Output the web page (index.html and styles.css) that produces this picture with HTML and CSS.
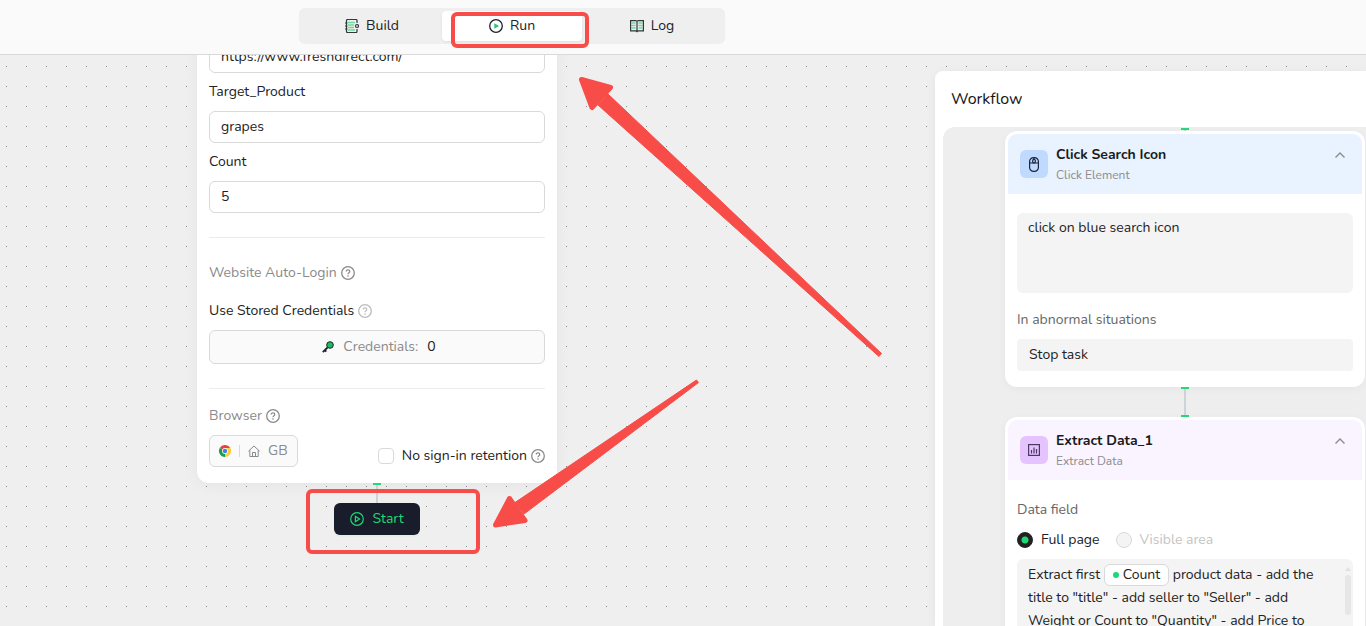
FILE: index.html
```html
<!DOCTYPE html>
<html lang="en">
<head>
<meta charset="utf-8">
<title>Workflow run</title>
<link rel="stylesheet" href="styles.css">
</head>
<body>
<svg class="symbols" aria-hidden="true">
  <symbol id="help" viewBox="0 0 14 14"><circle cx="7" cy="7" r="6.3" fill="none" stroke="currentColor" stroke-width="1.3"/><path d="M5.2 5.6c0-2.4 3.6-2.3 3.6-.1 0 1.300-1.800 1.300-1.800 2.700" fill="none" stroke="currentColor" stroke-width="1.200"/><circle cx="7" cy="10" r=".8" fill="currentColor"/></symbol>
  <symbol id="chevron" viewBox="0 0 12 12"><path d="M1.500 8.500 6 4l4.500 4.500" fill="none" stroke="currentColor" stroke-width="1.400"/></symbol>
</svg>

<header class="topbar">
  <nav class="tabs">
    <button class="tab" type="button">
      <svg class="icon-md" viewBox="0 0 14 14" fill="none"><path d="M3 3.500h7M3 6h6M3 8.500h6M3 11h7" stroke="#6fdc9c" stroke-width="1.500"/><path d="M12 4V1.500a1 1 0 0 0-1-1H2.500a1 1 0 0 0-1 1v11a1 1 0 0 0 1 1H11a1 1 0 0 0 1-1V10M0 4h2.500M0 7h2.500M0 10h2.500" stroke="#33363f" stroke-width="1.200"/><circle cx="12" cy="7" r="1.500" stroke="#33363f" stroke-width="1.200"/></svg>
      Build
    </button>
    <button class="tab tab-active" type="button">
      <svg class="icon-md" viewBox="0 0 14 14"><circle cx="7" cy="7" r="6.300" fill="none" stroke="#1d2129" stroke-width="1.300"/><path d="M5.300 4.200v5.600L10 7z" fill="#1fc96b"/></svg>
      Run
    </button>
    <button class="tab" type="button">
      <svg class="icon-md" viewBox="0 0 14 14" fill="none"><path d="M1.500 4h4M1.500 6.500h4M8.500 4h4M8.500 6.500h4M1.500 9h4M8.500 9h4" stroke="#6fdc9c" stroke-width="1.300"/><path d="M.6 1.600h5.200L7 2.400l1.200-.8h5.200v10.200H8.200L7 12.700l-1.200-.9H.6zM7 2.400v10" stroke="#33363f" stroke-width="1.200"/></svg>
      Log
    </button>
  </nav>
</header>

<main class="canvas">
  <section class="run-node">
    <form class="card">
      <input class="field" type="text" aria-label="Website URL" value="https://www.freshdirect.com/">
      <label class="label" for="product">Target_Product</label>
      <input class="field" id="product" type="text" value="grapes">
      <label class="label" for="count">Count</label>
      <input class="field" id="count" type="text" value="5">
      <hr class="rule">
      <h2 class="group-title">Website Auto-Login <svg class="icon-md"><use href="#help"/></svg></h2>
      <h3 class="sub-title">Use Stored Credentials <svg class="icon-md faint"><use href="#help"/></svg></h3>
      <button class="outline credentials" type="button">
        <svg class="icon-sm" viewBox="0 0 12 12"><path d="M5.500 6.500.8 11.200M2.800 9.200l1.500 1.500" stroke="#1d2129" stroke-width="1.800"/><circle cx="8" cy="4" r="3.300" fill="#17bf63" stroke="#1d2129"/></svg>
        <span>Credentials:</span><span class="strong">0</span>
      </button>
      <hr class="rule">
      <h2 class="group-title browser-title">Browser <svg class="icon-md"><use href="#help"/></svg></h2>
      <div class="browser-row">
        <button class="outline browser" type="button">
          <svg class="icon-sm" viewBox="0 0 12 12"><path d="M6 6 .8 3A6 6 0 0 1 11.200 3z" fill="#ea4335"/><path d="M6 6 .8 3A6 6 0 0 0 6 12l3-4z" fill="#1a9c50"/><path d="M6 6V3h5.200A6 6 0 0 1 6 12z" fill="#fbce35"/><circle cx="6" cy="6" r="2.900" fill="#fff"/><circle cx="6" cy="6" r="2.200" fill="#3f7fee"/></svg>
          <span class="bar"></span>
          <svg class="icon-sm" viewBox="0 0 12 12" fill="none" stroke="#8a8a8a"><path d="M.4 6.200 6 1l5.600 5.200M1.800 5.200v6.300h8.400V5.200M4.500 11.500v-4h3v4"/></svg>
          <span>GB</span>
        </button>
        <label class="retention"><input class="check" type="checkbox">No sign-in retention <svg class="icon-md muted"><use href="#help"/></svg></label>
      </div>
    </form>
    <span class="link link-start"></span>
    <button class="start" type="button">
      <svg class="icon-md" viewBox="0 0 14 14" fill="none" stroke="currentColor" stroke-width="1.200"><circle cx="7" cy="7" r="6.300"/><path d="M5.400 4.400v5.200L9.600 7z"/></svg>
      Start
    </button>
  </section>

  <aside class="panel">
    <h2 class="panel-title">Workflow</h2>
    <div class="flow">
      <span class="link link-in"></span>
      <article class="step">
        <header class="step-head blue">
          <span class="tile"><svg class="icon-mouse" viewBox="0 0 10 15" fill="none" stroke="#1d2740" stroke-width="1.200"><rect x=".6" y=".6" width="8.800" height="13.800" rx="4"/><path d="M.6 6h8.800M5 .6V2"/><rect x="3.700" y="2.300" width="2.600" height="3.700" rx="1.300"/></svg></span>
          <div class="names"><h3 class="step-name">Click Search Icon</h3><p class="step-kind">Click Element</p></div>
          <button class="toggle" type="button" aria-label="Collapse"><svg class="icon-sm"><use href="#chevron"/></svg></button>
        </header>
        <div class="step-body">
          <textarea class="prompt" aria-label="Element description">click on blue search icon</textarea>
          <label class="step-label" for="abnormal">In abnormal situations</label>
          <select class="choice" id="abnormal"><option>Stop task</option></select>
        </div>
      </article>
      <span class="link link-between"></span>
      <article class="step">
        <header class="step-head purple">
          <span class="tile"><svg class="icon-sm" viewBox="0 0 12 12" fill="none" stroke="#4a3a63" stroke-width="1.200"><rect x=".6" y=".6" width="10.800" height="10.800"/><path d="M3.500 6v3.500M6 3.500v6M8.500 5v4.500"/></svg></span>
          <div class="names"><h3 class="step-name">Extract Data_1</h3><p class="step-kind">Extract Data</p></div>
          <button class="toggle" type="button" aria-label="Collapse"><svg class="icon-sm"><use href="#chevron"/></svg></button>
        </header>
        <div class="step-body">
          <h4 class="data-label">Data field</h4>
          <div class="radios">
            <label class="radio-label"><input class="radio" type="radio" name="area" checked>Full page</label>
            <label class="radio-label off"><input class="radio" type="radio" name="area" disabled>Visible area</label>
          </div>
          <div class="rich">
            <div class="rich-text" role="textbox" aria-label="Extraction prompt" contenteditable="true" spellcheck="false">Extract first <span class="chip">Count</span> product data - add the<br>title to "title" - add seller to "Seller" - add<br>Weight or Count to "Quantity" - add Price to</div>
            <div class="scroll"><svg class="scroll-arrow" viewBox="0 0 6 4"><path d="M0 4 3 0l3 4z" fill="#e2e2e2"/></svg><span class="thumb"></span></div>
          </div>
        </div>
      </article>
    </div>
  </aside>
</main>

<svg class="notes" viewBox="0 0 1366 626" aria-hidden="true">
  <g fill="none" stroke="#f74c48" stroke-width="4"><rect x="453" y="14" width="134" height="32" rx="4"/><rect x="308" y="491" width="170" height="61" rx="4"/></g>
  <g fill="#f74c48" stroke="#f74c48" stroke-linejoin="round">
    <path stroke-width="5" d="M581.500 79.500 610.500 87.500 592 107.500z"/>
    <path stroke-width="1" d="M608 94 881.500 353.500 879 356.500 598 105z"/>
    <path stroke-width="5" d="M495.500 525 509.500 498.500 525 520.500z"/>
    <path stroke-width="1" d="M515 502.500 696.500 380 698.500 382.500 524 514z"/>
  </g>
</svg>
</body>
</html>
```
FILE: styles.css
```css
* { box-sizing: border-box; }
html, body { height: 100%; }
body {
  margin: 0;
  display: flex;
  flex-direction: column;
  overflow: hidden;
  background: #efefef;
  color: #222;
  font: 14px/22px Nunito, Lato, sans-serif;
}
button, input, select, textarea { font: inherit; color: inherit; margin: 0; }
h2, h3, h4, p { margin: 0; font-size: 14px; font-weight: 400; }
svg { flex: none; }
.symbols { position: absolute; width: 0; height: 0; }
.icon-md { width: 14px; height: 14px; }
.icon-sm { width: 12px; height: 12px; }
.icon-mouse { width: 10px; height: 15px; }
.muted { color: #8a8a8a; }
.faint { color: #bdbdbd; }

.topbar {
  flex: none;
  height: 55px;
  padding: 8px 0 0 299px;
  background: #fafafa;
  border-bottom: 1px solid #d9d9d9;
  display: flex;
}
.tabs { display: flex; width: 426px; height: 36px; padding: 3px; background: #efefef; border-radius: 6px; }
.tab {
  flex: 1;
  display: flex;
  align-items: center;
  justify-content: center;
  gap: 7px;
  padding: 0;
  border: 0;
  border-radius: 4px;
  background: none;
}
.tab-active { background: #fff; box-shadow: 0 1px 3px #0001; }

.canvas {
  flex: 1;
  position: relative;
  overflow: hidden;
  display: flex;
  justify-content: flex-end;
  min-height: 0;
  background: conic-gradient(at 1px 1px, #efefef 270deg, #8b8b8b 0) 6px 11px / 20px 20px;
}

.run-node {
  position: absolute;
  left: 197px;
  top: -26px;
  width: 360px;
  display: flex;
  flex-direction: column;
  align-items: center;
}
.card {
  width: 100%;
  padding: 12px 12px 16px;
  background: #fff;
  border-radius: 12px;
  box-shadow: 0 2px 16px #0000000d;
  display: flex;
  flex-direction: column;
}
.field { height: 32px; padding: 0 11px 2px; border: 1px solid #d9d9d9; border-radius: 6px; background: #fff; }
.label { height: 38px; padding-top: 8px; }
.rule { width: 100%; height: 1px; margin: 24px 0; border: 0; background: #ececec; }
.group-title, .sub-title { display: flex; align-items: center; gap: 4px; }
.group-title { color: #8a8a8a; }
.sub-title { margin: 16px 0 8px; }
.browser-title { margin: -8px 0 8px; }
.outline {
  display: flex;
  align-items: center;
  height: 32px;
  border: 1px solid #d9d9d9;
  border-radius: 6px;
  background: #fafafa;
  color: #8a8a8a;
}
.credentials { height: 34px; padding: 0 0 0 4px; justify-content: center; gap: 9px; }
.strong { color: #222; }
.browser { padding: 0 9px; gap: 8px; }
.bar { width: 1px; height: 12px; background: #d9d9d9; }
.browser-row { display: flex; justify-content: space-between; align-items: flex-end; }
.retention { display: flex; align-items: center; gap: 4px; }
.check {
  appearance: none;
  width: 16px;
  height: 16px;
  margin-right: 4px;
  border: 1px solid #d9d9d9;
  border-radius: 4px;
  background: #fff;
}
.start {
  display: flex;
  align-items: center;
  gap: 8px;
  height: 32px;
  padding: 0 16px;
  border: 0;
  border-radius: 6px;
  background: #191c2a;
  color: #1fd873;
  box-shadow: 0 2px 0 #1fd8730d;
}

.link { flex: none; width: 8px; background: linear-gradient(#ced2da, #ced2da) center / 2px 100% no-repeat; border-top: 2px solid #26d877; }
.link-start { height: 20px; }
.link-in { height: 3px; margin-top: 1px; }
.link-between { height: 30px; border-bottom: 2px solid #26d877; }

.panel {
  flex: none;
  display: flex;
  flex-direction: column;
  width: 431px;
  margin-top: 16px;
  padding: 16px 0 0 8px;
  background: #fff;
  border-radius: 8px 0 0 0;
  box-shadow: 0 2px 12px #0000000d;
  z-index: 0;
}
.panel-title { padding: 0 8px 16px; font-size: 16px; line-height: 24px; color: #141414; }
.flow {
  flex: 1;
  min-height: 0;
  overflow: hidden;
  padding: 0 1px 0 62px;
  display: flex;
  flex-direction: column;
  align-items: center;
  background: #eee;
  border-radius: 12px 0 0 0;
}
.step { flex: none; width: 100%; padding: 3px; background: #fff; border-radius: 12px; box-shadow: 0 2px 8px #0000000a; }
.step-head { display: flex; align-items: center; gap: 8px; height: 60px; padding: 0 16px 0 12px; border-radius: 9px 9px 0 0; }
.blue { background: #e9f2ff; }
.purple { background: #f9f4ff; }
.tile { display: grid; place-items: center; width: 28px; height: 28px; border-radius: 6px; background: #bfd9ff; }
.purple .tile { background: #e4c3ff; }
.names { flex: 1; padding-top: 2px; }
.step-name { font-weight: 700; line-height: 20px; color: #1a1a1a; }
.step-kind { font-size: 12px; line-height: 20px; color: #8c8c8c; }
.toggle { display: grid; align-self: flex-start; margin-top: 15px; padding: 0; border: 0; background: none; color: #8c8c8c; }
.step-body { display: flex; flex-direction: column; padding: 19px 9px 13px; }
.prompt { width: 100%; height: 80px; padding: 4px 11px; border: 0; border-radius: 6px; background: #f4f4f4; resize: none; }
.step-label, .data-label { color: #666; }
.step-label { margin: 16px 0 8px; }
.choice { appearance: none; height: 32px; padding: 0 12px; border: 0; border-radius: 4px; background: #f4f4f4; }
.radios { display: flex; gap: 16px; margin: 8px 0; }
.radio-label { display: flex; align-items: center; gap: 8px; }
.off { color: #c4c4c4; }
.radio { appearance: none; width: 16px; height: 16px; border: 1px solid #d9d9d9; border-radius: 50%; background: #f4f4f4; }
.radio:checked { border-color: #222; background: radial-gradient(circle, #1fd873 3px, #222 4px); }
.rich { display: flex; justify-content: space-between; height: 96px; padding: 4px 2px 4px 11px; background: #f4f4f4; border-radius: 6px; }
.rich-text { line-height: 23px; white-space: nowrap; }
.chip { display: inline-block; height: 22px; line-height: 20px; padding: 0 8px; border: 1px solid #d9d9d9; border-radius: 6px; background: #fff; }
.chip::before { content: ""; display: inline-block; width: 6px; height: 6px; margin: 0 4px 1px 0; border-radius: 50%; background: #1fd873; }
.scroll { display: flex; flex-direction: column; align-items: center; gap: 4px; padding-top: 4px; }
.scroll-arrow { width: 6px; height: 4px; }
.thumb { width: 6px; height: 40px; border-radius: 3px; background: #e6e6e6; }

.notes { position: absolute; left: 0; top: 0; width: 1366px; height: 626px; pointer-events: none; z-index: 2; }
```
